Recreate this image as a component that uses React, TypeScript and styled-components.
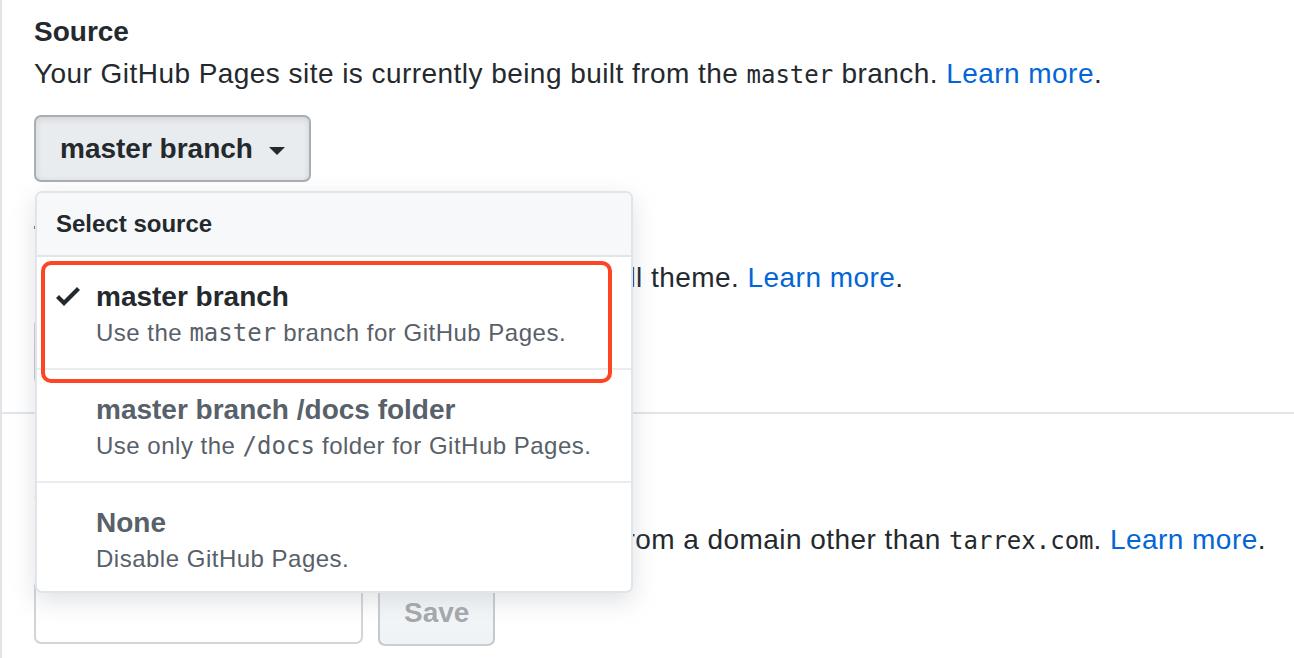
import { type FC } from 'react'
import styled, { createGlobalStyle } from 'styled-components'

const GlobalStyle = createGlobalStyle`
  html, body {
    margin: 0;
    padding: 0;
    background: #ffffff;
  }
  body {
    font-family: "Liberation Sans", Helvetica, Arial, sans-serif;
    color: #24292e;
    -webkit-font-smoothing: antialiased;
  }
`

const Page = styled.div`
  min-height: 658px;
  box-sizing: border-box;
  border-left: 2px solid #e1e4e8;
  padding-top: 11px;
`

const Section = styled.section`
  padding: 0 8px 0 32px;

  & + & {
    margin-top: 33px;
  }
`

const Heading = styled.h3`
  margin: 0;
  font-size: 28px;
  line-height: 42px;
  font-weight: 700;
`

const Text = styled.p`
  margin: 0;
  font-size: 28px;
  line-height: 42px;
  letter-spacing: 0.45px;
  white-space: nowrap;
`

const Code = styled.code`
  font-family: "DejaVu Sans Mono", "Liberation Mono", monospace;
  font-size: 24px;
  letter-spacing: 0;
`

const Link = styled.a`
  color: #0366d6;
  text-decoration: none;
`

const SelectWrap = styled.div`
  position: relative;
  display: inline-block;
  margin-top: 19px;
`

const Button = styled.button<{ $active?: boolean; $disabled?: boolean }>`
  display: inline-flex;
  align-items: center;
  box-sizing: border-box;
  height: 67px;
  padding: 0 24px;
  margin: 0;
  font-family: inherit;
  font-size: 28px;
  font-weight: 700;
  color: ${(p) => (p.$disabled ? 'rgba(36, 41, 46, 0.4)' : '#24292e')};
  background: ${(p) => (p.$active ? '#e9ecef' : 'linear-gradient(-180deg, #fafbfc 0%, #eff3f6 90%)')};
  border: 2px solid ${(p) => (p.$active ? 'rgba(27, 31, 35, 0.3)' : 'rgba(27, 31, 35, 0.2)')};
  border-radius: 7px;
  box-shadow: ${(p) => (p.$active ? 'inset 0 2px 6px rgba(27, 31, 35, 0.12)' : 'none')};
  cursor: pointer;
`

const Caret = styled.span`
  display: inline-block;
  width: 0;
  height: 0;
  margin-left: 16px;
  margin-top: 4px;
  border-top: 8px solid #24292e;
  border-left: 8px solid transparent;
  border-right: 8px solid transparent;
`

const Menu = styled.div`
  position: absolute;
  top: calc(100% + 9px);
  left: 1px;
  z-index: 10;
  width: 598px;
  box-sizing: border-box;
  background: #ffffff;
  border: 2px solid #e1e4e8;
  border-radius: 7px;
  box-shadow: 0 8px 24px rgba(149, 157, 165, 0.3);
`

const MenuHeader = styled.div`
  height: 62px;
  display: flex;
  align-items: center;
  padding: 0 19px;
  background: #f6f8fa;
  border-bottom: 2px solid #e1e4e8;
  border-radius: 5px 5px 0 0;
  font-size: 24px;
  font-weight: 700;
  color: #24292e;
`

const MenuItem = styled.div`
  display: grid;
  grid-template-columns: 24px 1fr;
  column-gap: 16px;
  padding: 20px 19px 19px;
  border-bottom: 2px solid #eaecef;

  &:last-child {
    border-bottom: none;
    padding-bottom: 16px;
  }
`

const CheckSlot = styled.div`
  padding-top: 3px;
  color: #24292e;
`

const ItemTitle = styled.div<{ $selected?: boolean }>`
  font-size: 28px;
  line-height: 40px;
  font-weight: 700;
  color: ${(p) => (p.$selected ? '#24292e' : '#586069')};
`

const ItemDesc = styled.div`
  font-size: 24px;
  line-height: 32px;
  letter-spacing: 0.5px;
  color: #586069;
`

const Highlight = styled.div`
  position: absolute;
  left: 4px;
  top: 68px;
  width: 571px;
  height: 122px;
  box-sizing: border-box;
  border: 4px solid #fd4423;
  border-radius: 10px;
  pointer-events: none;
  z-index: 1;
`

const Divider = styled.hr`
  margin: 27px 0 63px;
  border: none;
  border-top: 2px solid #e1e4e8;
`

const FormRow = styled.div`
  display: flex;
  gap: 15px;
  margin-top: 17px;
`

const Input = styled.input`
  width: 329px;
  height: 65px;
  box-sizing: border-box;
  border: 2px solid #d1d5da;
  border-radius: 7px;
  padding: 0 16px;
  font-size: 28px;
  font-family: inherit;
`

const Check: FC = () => (
  <svg width="24" height="32" viewBox="0 0 12 16" fill="currentColor">
    <path d="M12 5l-8 8-4-4 1.5-1.5L4 10l6.5-6.5L12 5z" />
  </svg>
)

const options = [
  {
    title: 'master branch',
    desc: (
      <>
        Use the <Code>master</Code> branch for GitHub Pages.
      </>
    ),
    selected: true,
  },
  {
    title: 'master branch /docs folder',
    desc: (
      <>
        Use only the <Code>/docs</Code> folder for GitHub Pages.
      </>
    ),
    selected: false,
  },
  { title: 'None', desc: <>Disable GitHub Pages.</>, selected: false },
]

const App: FC = () => (
  <>
    <GlobalStyle />
    <Page>
      <Section>
        <Heading>Source</Heading>
        <Text>
          Your GitHub Pages site is currently being built from the <Code>master</Code> branch.{' '}
          <Link href="#">Learn more</Link>.
        </Text>
        <SelectWrap>
          <Button $active>
            master branch
            <Caret />
          </Button>
          <Menu>
            <Highlight />
            <MenuHeader>Select source</MenuHeader>
            {options.map((o) => (
              <MenuItem key={o.title}>
                <CheckSlot>{o.selected && <Check />}</CheckSlot>
                <div>
                  <ItemTitle $selected={o.selected}>{o.title}</ItemTitle>
                  <ItemDesc>{o.desc}</ItemDesc>
                </div>
              </MenuItem>
            ))}
          </Menu>
        </SelectWrap>
      </Section>
      <Section>
        <Heading>Theme chooser</Heading>
        <Text>
          Select a theme to publish your site with a Jekyll theme. <Link href="#">Learn more</Link>.
        </Text>
        <SelectWrap>
          <Button>Choose a theme</Button>
        </SelectWrap>
      </Section>
      <Divider />
      <Section>
        <Heading>Custom domain</Heading>
        <Text>
          Custom domains allow you to serve your site from a domain other than <Code>tarrex.com</Code>.{' '}
          <Link href="#">Learn more</Link>.
        </Text>
        <FormRow>
          <Input type="text" />
          <Button $disabled disabled>
            Save
          </Button>
        </FormRow>
      </Section>
    </Page>
  </>
)

export default App
